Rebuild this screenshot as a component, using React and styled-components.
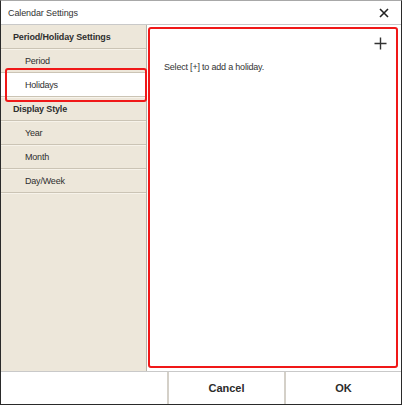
import React from "react";
import styled, { createGlobalStyle } from "styled-components";

const GlobalStyle = createGlobalStyle`
  html, body {
    margin: 0;
    padding: 0;
    background: #ffffff;
  }
  body {
    font-family: "Liberation Sans", Arial, sans-serif;
    color: #2b2b2b;
  }
`;

const Window = styled.div`
  width: 402px;
  height: 405px;
  box-sizing: border-box;
  display: flex;
  flex-direction: column;
  background: #fff;
  border: 1px solid #2a2a2a;
  border-top-color: #a8a8a8;
`;

const TitleBar = styled.div`
  height: 23px;
  flex-shrink: 0;
  display: flex;
  align-items: center;
  justify-content: space-between;
  padding: 0 10px 0 7px;
  border-bottom: 1px solid #c9c9c9;
  font-size: 9px;
  letter-spacing: -0.1px;
  color: #333;
`;

const CloseButton = styled.button`
  width: 14px;
  height: 14px;
  padding: 0;
  border: none;
  background: none;
  display: flex;
  align-items: center;
  justify-content: center;
`;

const Body = styled.div`
  flex: 1;
  display: flex;
  min-height: 0;
`;

const Sidebar = styled.div`
  position: relative;
  width: 145px;
  flex-shrink: 0;
  background: #ede7da;
  border-right: 1px solid #b9b4aa;
  display: flex;
  flex-direction: column;
`;

const NavRow = styled.div`
  height: 24px;
  box-sizing: border-box;
  display: flex;
  align-items: center;
  padding-left: ${(p) => (p.$heading ? "12px" : "24px")};
  font-size: 9px;
  letter-spacing: ${(p) => (p.$heading ? "-0.15px" : "-0.2px")};
  font-weight: ${(p) => (p.$heading ? "bold" : "normal")};
  color: #2f2f2f;
  background: ${(p) => (p.$active ? "#ffffff" : "transparent")};
  border-bottom: 1px solid #cbc4b5;
  box-shadow: 0 1px 0 #f7f3ea;
`;

const Highlight = styled.div`
  position: absolute;
  left: 4px;
  top: 43px;
  width: 142px;
  height: 34px;
  box-sizing: border-box;
  border: 2.5px solid #f01818;
  border-radius: 3px;
  pointer-events: none;
`;

const Content = styled.div`
  flex: 1;
  display: flex;
  padding: 2px 3px 3px 1px;
`;

const Panel = styled.div`
  flex: 1;
  box-sizing: border-box;
  border: 2.5px solid #f01818;
  border-radius: 3px;
  display: flex;
  flex-direction: column;
  padding: 6px 8px 0 14px;
`;

const AddButton = styled.button`
  align-self: flex-end;
  width: 16px;
  height: 16px;
  padding: 0;
  border: none;
  background: none;
  display: flex;
  align-items: center;
  justify-content: center;
`;

const Hint = styled.p`
  margin: 11px 0 0;
  font-size: 9px;
  letter-spacing: -0.2px;
  color: #333;
`;

const Footer = styled.div`
  height: 32px;
  flex-shrink: 0;
  display: grid;
  grid-template-columns: 166px 117px 1fr;
  border-top: 1px solid #c9c9c9;
`;

const FooterCell = styled.div`
  display: flex;
  align-items: center;
  justify-content: center;
  font-size: 11px;
  font-weight: bold;
  color: #2b2b2b;
  border-left: ${(p) => (p.$divided ? "2px solid #d4d0c8" : "none")};
`;

const navItems = [
  { label: "Period/Holiday Settings", heading: true },
  { label: "Period" },
  { label: "Holidays", active: true },
  { label: "Display Style", heading: true },
  { label: "Year" },
  { label: "Month" },
  { label: "Day/Week" },
];

export default function App() {
  return (
    <>
      <GlobalStyle />
      <Window>
        <TitleBar>
          <span>Calendar Settings</span>
          <CloseButton>
            <svg width="10" height="10" viewBox="0 0 10 10">
              <path d="M1 1L9 9M9 1L1 9" stroke="#222" strokeWidth="1.6" />
            </svg>
          </CloseButton>
        </TitleBar>
        <Body>
          <Sidebar>
            {navItems.map((item) => (
              <NavRow key={item.label} $heading={item.heading} $active={item.active}>
                {item.label}
              </NavRow>
            ))}
            <Highlight />
          </Sidebar>
          <Content>
            <Panel>
              <AddButton>
                <svg width="13" height="13" viewBox="0 0 13 13">
                  <path d="M6.5 0.5V12.5M0.5 6.5H12.5" stroke="#333" strokeWidth="1.4" />
                </svg>
              </AddButton>
              <Hint>Select [+] to add a holiday.</Hint>
            </Panel>
          </Content>
        </Body>
        <Footer>
          <FooterCell />
          <FooterCell $divided>Cancel</FooterCell>
          <FooterCell $divided>OK</FooterCell>
        </Footer>
      </Window>
    </>
  );
}
